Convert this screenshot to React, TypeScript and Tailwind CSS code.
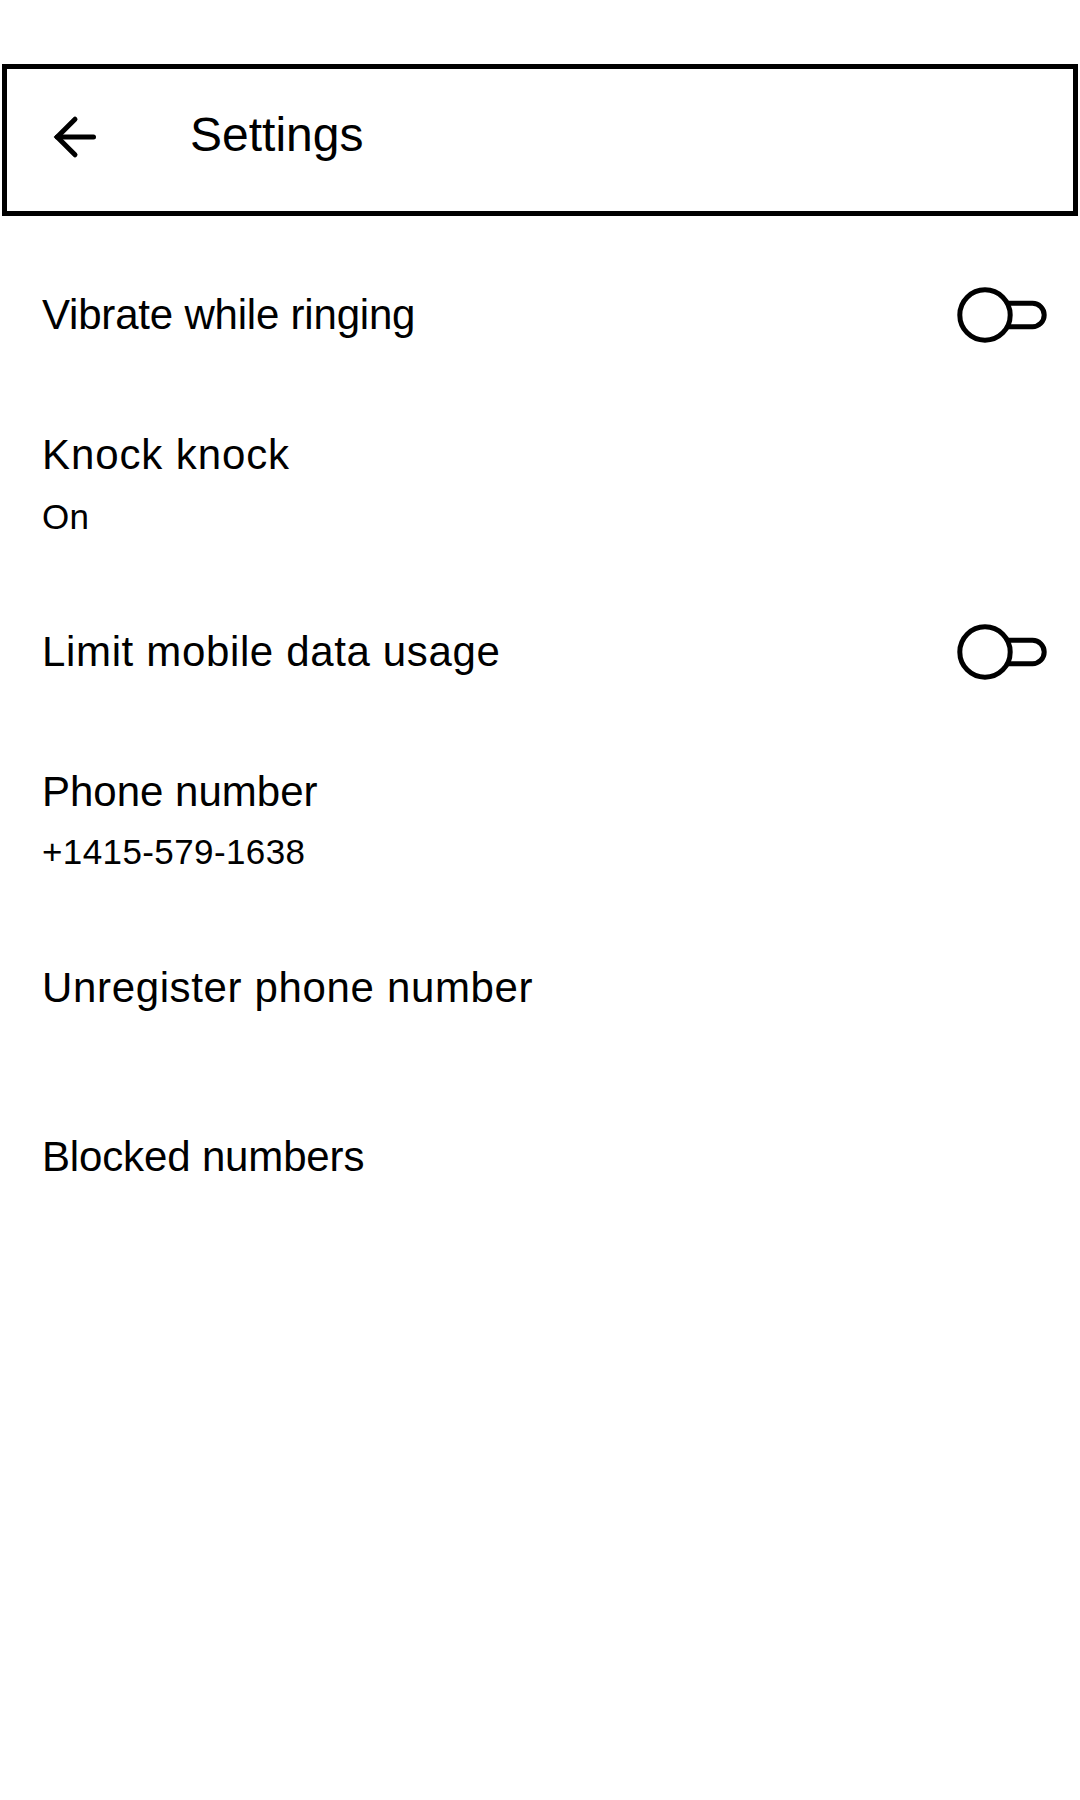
import React from "react";

function BackArrow() {
  return (
    <svg width="48" height="48" viewBox="0 0 48 48" fill="none" stroke="black" strokeWidth="5" strokeLinecap="round" strokeLinejoin="miter">
      <path d="M24 6.2 L6.2 24 L24 41.8" />
      <path d="M6.2 24 H42.5" />
    </svg>
  );
}

function Toggle() {
  return (
    <svg className="-my-[9px] shrink-0" width="100" height="60" viewBox="0 0 100 60" fill="none" stroke="black" strokeWidth="5">
      <circle cx="33" cy="30" r="25.2" />
      <path d="M55 18.3 H80.5 A11.7 11.7 0 0 1 80.5 41.7 H55" />
    </svg>
  );
}

type Row = { title: string; sub?: string; subMt?: string; toggle?: boolean; mt: string; track: string };

const rows: Row[] = [
  { title: "Vibrate while ringing", toggle: true, mt: "mt-[78px]", track: "tracking-[-0.2px]" },
  { title: "Knock knock", sub: "On", subMt: "mt-[23px]", mt: "mt-[98px]", track: "tracking-[0.9px]" },
  { title: "Limit mobile data usage", toggle: true, mt: "mt-[97px]", track: "tracking-[0.65px]" },
  { title: "Phone number", sub: "+1415-579-1638", subMt: "mt-[21px]", mt: "mt-[98px]", track: "tracking-[0px]" },
  { title: "Unregister phone number", mt: "mt-[98px]", track: "tracking-[0.65px]" },
  { title: "Blocked numbers", mt: "mt-[127px]", track: "tracking-[-0.15px]" },
];

export default function App() {
  return (
    <div className="min-h-[1800px] w-[1080px] bg-white text-black font-[family-name:'Liberation_Sans',Arial,sans-serif]">
      <div className="pt-[64px] px-[2px]">
        <header className="flex h-[152px] items-start border-[5px] border-black">
          <div className="ml-[44px] mt-[44px] shrink-0">
            <BackArrow />
          </div>
          <h1 className="ml-[91px] mt-[42px] text-[48px] leading-[48px] font-normal">Settings</h1>
        </header>
      </div>

      <div className="pl-[42px] pr-[28px]">
        {rows.map((row) => (
          <div key={row.title} className={`${row.mt} flex items-center justify-between`}>
            <div>
              <div className={`text-[42px] leading-[42px] ${row.track}`}>{row.title}</div>
              {row.sub && (
                <div className={`${row.subMt} text-[35px] leading-[35px] tracking-[0.4px]`}>{row.sub}</div>
              )}
            </div>
            {row.toggle && <Toggle />}
          </div>
        ))}
      </div>
    </div>
  );
}
